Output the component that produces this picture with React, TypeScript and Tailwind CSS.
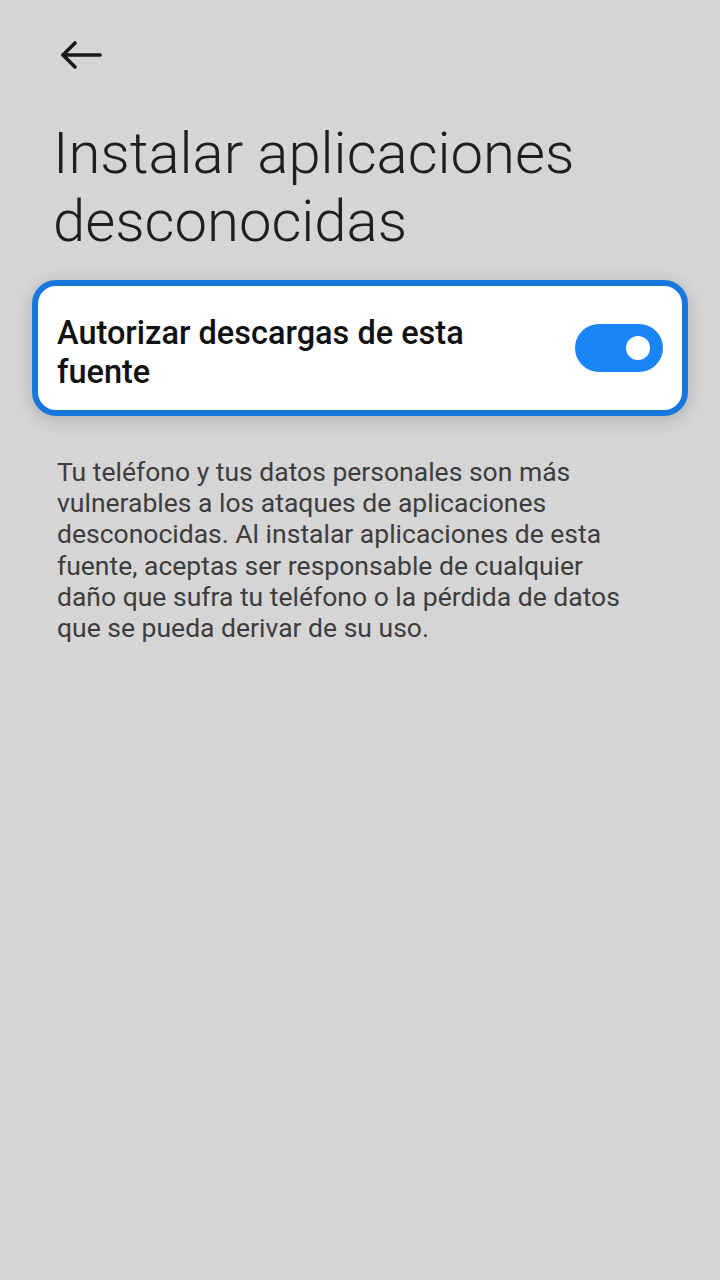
import React from 'react';

export default function App() {
  return (
    <div
      className="min-h-[1280px] w-full bg-[#d5d5d5] text-black"
      style={{ fontFamily: 'Roboto, "Noto Sans", sans-serif' }}
    >
      {/* Top bar */}
      <div className="h-[119px] pl-[60px] pt-[40px]">
        <svg width="42" height="30" viewBox="0 0 42 30" fill="none">
          <path d="M3 15 H40" stroke="#1a1a1a" strokeWidth="3.6" strokeLinecap="round" />
          <path d="M15 3 L3 15 L15 27" stroke="#1a1a1a" strokeWidth="3.6" strokeLinecap="round" strokeLinejoin="round" />
        </svg>
      </div>

      {/* Title */}
      <h1 className="pl-[53px] pr-[40px] text-[58px] font-light leading-[68px] text-[#1f1f1f]">
        Instalar aplicaciones desconocidas
      </h1>

      {/* Toggle card */}
      <div className="mx-[32px] mt-[25px] rounded-[24px] border-[6px] border-[#1976dc] bg-white shadow-[0_4px_18px_rgba(0,0,0,0.18)]">
        <div className="flex h-[124px] items-center justify-between pl-[19px] pr-[19px]">
          <p className="max-w-[460px] pt-[9px] text-[32.5px] font-medium leading-[39px] text-[#111]">
            Autorizar descargas de esta fuente
          </p>
          <div className="flex h-[48px] w-[88px] shrink-0 items-center justify-end rounded-full bg-[#1a86f5] pr-[13px]">
            <div className="h-[24px] w-[24px] rounded-full bg-white" />
          </div>
        </div>
      </div>

      {/* Description */}
      <p className="mt-[40px] pl-[57px] pr-[82px] text-[26.5px] leading-[31.2px] text-[#3d3d3d]">
        Tu teléfono y tus datos personales son más vulnerables a los ataques de aplicaciones desconocidas. Al instalar
        aplicaciones de esta fuente, aceptas ser responsable de cualquier daño que sufra tu teléfono o la pérdida de
        datos que se pueda derivar de su uso.
      </p>
    </div>
  );
}
